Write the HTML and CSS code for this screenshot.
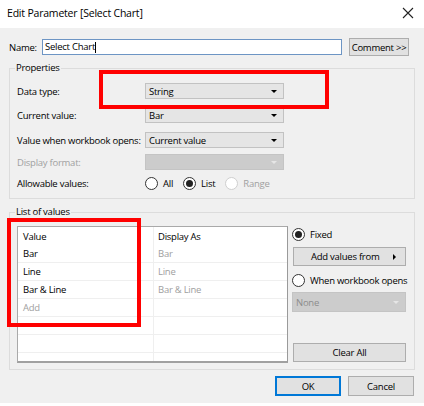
FILE: index.html
```html
<!DOCTYPE html>
<html>
<head>
<meta charset="utf-8">
<link rel="stylesheet" href="styles.css">
</head>
<body>
<div class="dialog">
  <div class="titlebar">
    <span class="title">Edit Parameter [Select Chart]</span>
    <svg class="close" width="12" height="12" viewBox="0 0 12 12"><path d="M1 1 L11 11 M11 1 L1 11" stroke="#222" stroke-width="1.1" fill="none"/></svg>
  </div>
  <div class="body">
    <div class="name-row">
      <span class="name-label">Name:</span>
      <div class="name-input">Select Chart<span class="caret"></span></div>
      <div class="btn comment">Comment &gt;&gt;</div>
    </div>

    <div class="group props">
      <span class="legend">Properties</span>
      <div class="prow">
        <span class="plabel">Data type:</span>
        <div class="combo"><span>String</span><span class="arrow"></span></div>
      </div>
      <div class="prow">
        <span class="plabel">Current value:</span>
        <div class="combo"><span>Bar</span><span class="arrow"></span></div>
      </div>
      <div class="prow">
        <span class="plabel">Value when workbook opens:</span>
        <div class="combo"><span>Current value</span><span class="arrow"></span></div>
      </div>
      <div class="prow">
        <span class="plabel disabled">Display format:</span>
        <div class="combo off"><span></span><span class="arrow"></span></div>
      </div>
      <div class="prow">
        <span class="plabel">Allowable values:</span>
        <div class="radios">
          <span class="radio"></span><span class="rlabel">All</span>
          <span class="radio on"></span><span class="rlabel">List</span>
          <span class="radio dim"></span><span class="rlabel disabled">Range</span>
        </div>
      </div>
    </div>

    <div class="group list">
      <span class="legend">List of values</span>
      <div class="list-inner">
        <div class="table">
          <div class="trow head"><span class="c1">Value</span><span class="c2">Display As</span></div>
          <div class="trow"><span class="c1">Bar</span><span class="c2 gray">Bar</span></div>
          <div class="trow"><span class="c1">Line</span><span class="c2 gray">Line</span></div>
          <div class="trow"><span class="c1">Bar &amp; Line</span><span class="c2 gray">Bar &amp; Line</span></div>
          <div class="trow"><span class="c1 gray">Add</span><span class="c2"></span></div>
          <div class="trow"><span class="c1"></span><span class="c2"></span></div>
          <div class="trow"><span class="c1"></span><span class="c2"></span></div>
          <div class="trow last"><span class="c1"></span><span class="c2"></span></div>
        </div>
        <div class="side">
          <div class="sradio"><span class="radio on"></span><span class="rlabel">Fixed</span></div>
          <div class="btn addvals"><span>Add values from</span><span class="rarrow"></span></div>
          <div class="sradio when"><span class="radio"></span><span class="rlabel">When workbook opens</span></div>
          <div class="combo off none"><span>None</span><span class="arrow"></span></div>
          <div class="spacer"></div>
          <div class="btn clear">Clear All</div>
        </div>
      </div>
    </div>

    <div class="footer">
      <div class="btn ok">OK</div>
      <div class="btn cancel">Cancel</div>
    </div>
  </div>
  <div class="bottom"></div>

  <div class="mark mark1"></div>
  <div class="mark mark2"></div>
</div>
</body>
</html>
```

FILE: styles.css
```css
* { box-sizing: border-box; }
html, body { margin: 0; padding: 0; }
body {
  width: 424px;
  height: 406px;
  overflow: hidden;
  font-family: "Open Sans", "Noto Sans", sans-serif;
  font-size: 9.5px;
  letter-spacing: -0.25px;
  white-space: nowrap;
  color: #000;
  background: #fff;
}
.dialog { position: relative; width: 424px; height: 406px; }

.titlebar {
  height: 28px;
  background: #fff;
  display: flex;
  align-items: center;
  justify-content: space-between;
  padding: 0 10px 2px 7px;
}
.title { font-size: 10.5px; letter-spacing: -0.2px; color: #000; }
.close { display: block; }

.body {
  height: 375px;
  background: #f0f0f0;
  padding: 10px 9px 0 9px;
  display: flex;
  flex-direction: column;
}
.bottom { height: 3px; background: #fff; }

.name-row {
  display: flex;
  align-items: center;
  height: 18px;
}
.name-label { width: 33px; }
.name-input {
  width: 300px;
  height: 16px;
  border: 1px solid #6d95c4;
  background: #fff;
  padding-left: 2px;
  line-height: 14px;
  display: flex;
  align-items: center;
}
.caret { width: 1px; height: 11px; background: #000; }
.btn {
  background: #e1e1e1;
  border: 1px solid #adadad;
  display: flex;
  align-items: center;
  justify-content: center;
}
.comment { width: 60px; height: 18px; margin-left: 7px; }

.group {
  border: 1px solid #dcdcdc;
  position: relative;
}
.legend {
  position: absolute;
  top: -8px;
  left: 5px;
  background: #f0f0f0;
  padding: 0 1px;
  line-height: 14px;
}
.props {
  margin-top: 12px;
  height: 131px;
  padding: 14px 0 0 7px;
  display: flex;
  flex-direction: column;
}
.prow {
  display: flex;
  align-items: center;
  height: 16px;
  margin-bottom: 8px;
}
.prow:nth-child(3) { margin-bottom: 9px; }
.prow:nth-child(4) { margin-bottom: 6px; }
.prow:nth-child(5) { margin-bottom: 7px; }
.plabel { width: 128px; }
.disabled { color: #a0a0a0; }
.combo {
  width: 139px;
  height: 16px;
  background: #e5e5e5;
  border: 1px solid #c2c2c2;
  display: flex;
  align-items: center;
  justify-content: space-between;
  padding: 0 6px 0 3px;
}
.combo.off { background: #cccccc; border-color: #c4c4c4; color: #8c8c8c; }
.arrow {
  width: 0; height: 0;
  border-left: 3px solid transparent;
  border-right: 3px solid transparent;
  border-top: 3px solid #000;
}
.combo.off .arrow { border-top-color: #e6e6e6; }

.radios { display: flex; align-items: center; }
.radio {
  width: 13px;
  height: 13px;
  border-radius: 50%;
  border: 1px solid #333;
  background: #fff;
  position: relative;
  flex: none;
}
.radio.on::after {
  content: "";
  position: absolute;
  left: 2px; top: 2px;
  width: 7px; height: 7px;
  border-radius: 50%;
  background: #222;
}
.radio.dim { border-color: #cfcfcf; }
.rlabel { margin-left: 5px; margin-right: 10px; }

.list {
  margin-top: 13px;
  height: 158px;
  padding: 13px 0 0 7px;
}
.list-inner { display: flex; }
.table {
  width: 271px;
  height: 137px;
  background: #fff;
  border: 1px solid #a9a9a9;
  border-right-color: #9a9a9a;
  border-bottom: 2px solid #a0a0a0;
  display: flex;
  flex-direction: column;
  overflow: hidden;
}
.trow {
  display: flex;
  height: 18px;
  border-bottom: 1px solid #efefef;
  flex: none;
}
.trow.head { height: 18px; border-bottom: none; }
.c1 {
  width: 136px;
  border-right: 1px solid #efefef;
  padding-left: 5px;
  display: flex;
  align-items: center;
}
.c2 {
  flex: 1;
  padding-left: 4px;
  display: flex;
  align-items: center;
}
.gray { color: #a0a0a0; }

.side {
  width: 114px;
  margin-left: 4px;
  height: 136px;
  display: flex;
  flex-direction: column;
}
.sradio { display: flex; align-items: center; height: 14px; margin-top: 1px; }
.sradio .rlabel { margin-right: 0; }
.addvals {
  margin-top: 6px;
  margin-left: 1px;
  width: 113px;
  height: 19px;
  justify-content: space-between;
  padding: 0 9px 0 17px;
}
.rarrow {
  width: 0; height: 0;
  border-top: 3px solid transparent;
  border-bottom: 3px solid transparent;
  border-left: 3px solid #000;
}
.when { margin-top: 7px; }
.combo.none { width: 114px; height: 20px; margin-top: 5px; padding-left: 3px; }
.spacer { flex: 1; }
.clear { height: 19px; width: 113px; margin-left: 1px; margin-bottom: 0; }

.footer {
  display: flex;
  justify-content: flex-end;
  padding-right: 1px;
  margin-top: 6px;
}
.ok { width: 66px; height: 20px; border: 1px solid #0078d7; box-shadow: inset 0 0 0 1px #0078d7; }
.cancel { width: 66px; height: 20px; margin-left: 7px; }

.mark {
  position: absolute;
  border: 4.5px solid #ff0000;
}
.mark1 { left: 99px; top: 70px; width: 230px; height: 39px; }
.mark2 { left: 7px; top: 218px; width: 134px; height: 109px; }
```
